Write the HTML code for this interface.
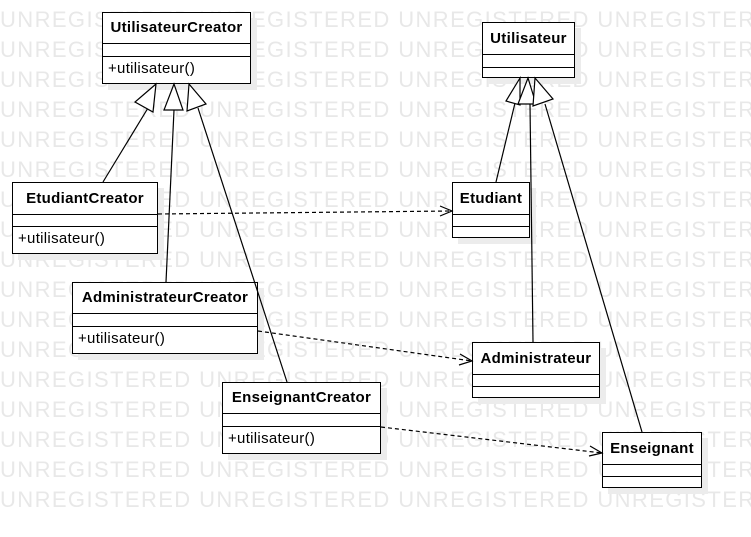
<!DOCTYPE html>
<html><head><meta charset="utf-8"><style>
body{margin:0;width:751px;height:537px;background:#fff;position:relative;overflow:hidden;font-family:"Liberation Sans",Arial,sans-serif}
.wm{position:absolute;left:0;width:751px;overflow:hidden;font-size:22px;color:#e8e8e8;white-space:nowrap;letter-spacing:1.4px;line-height:30px}
.b{position:absolute;border:1.5px solid #000;background:#fff;box-sizing:border-box;box-shadow:6px 6px 0 #ececec}
.n{font-weight:bold;font-size:15px;letter-spacing:0.3px;text-align:center;border-bottom:1.5px solid #000;box-sizing:border-box}
.e{border-bottom:1.5px solid #000;box-sizing:border-box}
.o{font-size:15px;letter-spacing:0.3px;padding-left:5px}
svg{position:absolute;left:0;top:0;z-index:5}
</style></head><body>
<div id="w"></div>
<script>
var s='';for(var i=0;i<17;i++){s+='<div class="wm" style="top:'+(5+i*30)+'px">UNREGISTERED UNREGISTERED UNREGISTERED UNREGISTERED</div>';}
document.getElementById('w').innerHTML=s;
</script>
<svg width="751" height="537">
<g stroke="#000" stroke-width="1.2" fill="none">
<line x1="103" y1="182" x2="148" y2="108"/>
<line x1="166" y1="282" x2="174" y2="110"/>
<line x1="287" y1="382" x2="198" y2="108"/>
<line x1="496" y1="182" x2="515" y2="103"/>
<line x1="533" y1="342" x2="530" y2="104"/>
<line x1="642" y1="432" x2="545" y2="104"/>
<g stroke-dasharray="4,3">
<line x1="158" y1="214" x2="452" y2="211"/>
<line x1="258" y1="331" x2="472" y2="361"/>
<line x1="381" y1="427" x2="602" y2="453"/>
</g>
<polyline points="440,206 452,211 440,216"/>
<polyline points="460,354 472,361 459,365"/>
<polyline points="590,446 602,453 589,456"/>
</g>
<g stroke="#000" stroke-width="1.2" fill="#fff">
<polygon points="156,84 135,102 153,112"/>
<polygon points="174,84 164,110 183,110"/>
<polygon points="189,84 187,111 206,104"/>
<polygon points="520,78 506,101 520,105"/>
<polygon points="528,78 518,104 536,104"/>
<polygon points="535,78 533,106 553,99"/>
</g>
</svg>
<div class="b" style="left:102px;top:12px;width:149px;height:72px"><div class="n" style="height:31px;line-height:30px">UtilisateurCreator</div><div class="e" style="height:13px"></div><div class="o" style="line-height:24px">+utilisateur()</div></div>
<div class="b" style="left:12px;top:182px;width:146px;height:72px"><div class="n" style="height:32px;line-height:31px">EtudiantCreator</div><div class="e" style="height:12px"></div><div class="o" style="line-height:24px">+utilisateur()</div></div>
<div class="b" style="left:72px;top:282px;width:186px;height:72px"><div class="n" style="height:31px;line-height:30px">AdministrateurCreator</div><div class="e" style="height:13px"></div><div class="o" style="line-height:24px">+utilisateur()</div></div>
<div class="b" style="left:222px;top:382px;width:159px;height:72px"><div class="n" style="height:31px;line-height:30px">EnseignantCreator</div><div class="e" style="height:13px"></div><div class="o" style="line-height:24px">+utilisateur()</div></div>
<div class="b" style="left:482px;top:22px;width:93px;height:56px"><div class="n" style="height:32px;line-height:31px">Utilisateur</div><div class="e" style="height:13px"></div></div>
<div class="b" style="left:452px;top:182px;width:78px;height:56px"><div class="n" style="height:32px;line-height:31px">Etudiant</div><div class="e" style="height:12px"></div></div>
<div class="b" style="left:472px;top:342px;width:128px;height:56px"><div class="n" style="height:32px;line-height:31px">Administrateur</div><div class="e" style="height:12px"></div></div>
<div class="b" style="left:602px;top:432px;width:100px;height:56px"><div class="n" style="height:32px;line-height:31px">Enseignant</div><div class="e" style="height:12px"></div></div>
</body></html>
